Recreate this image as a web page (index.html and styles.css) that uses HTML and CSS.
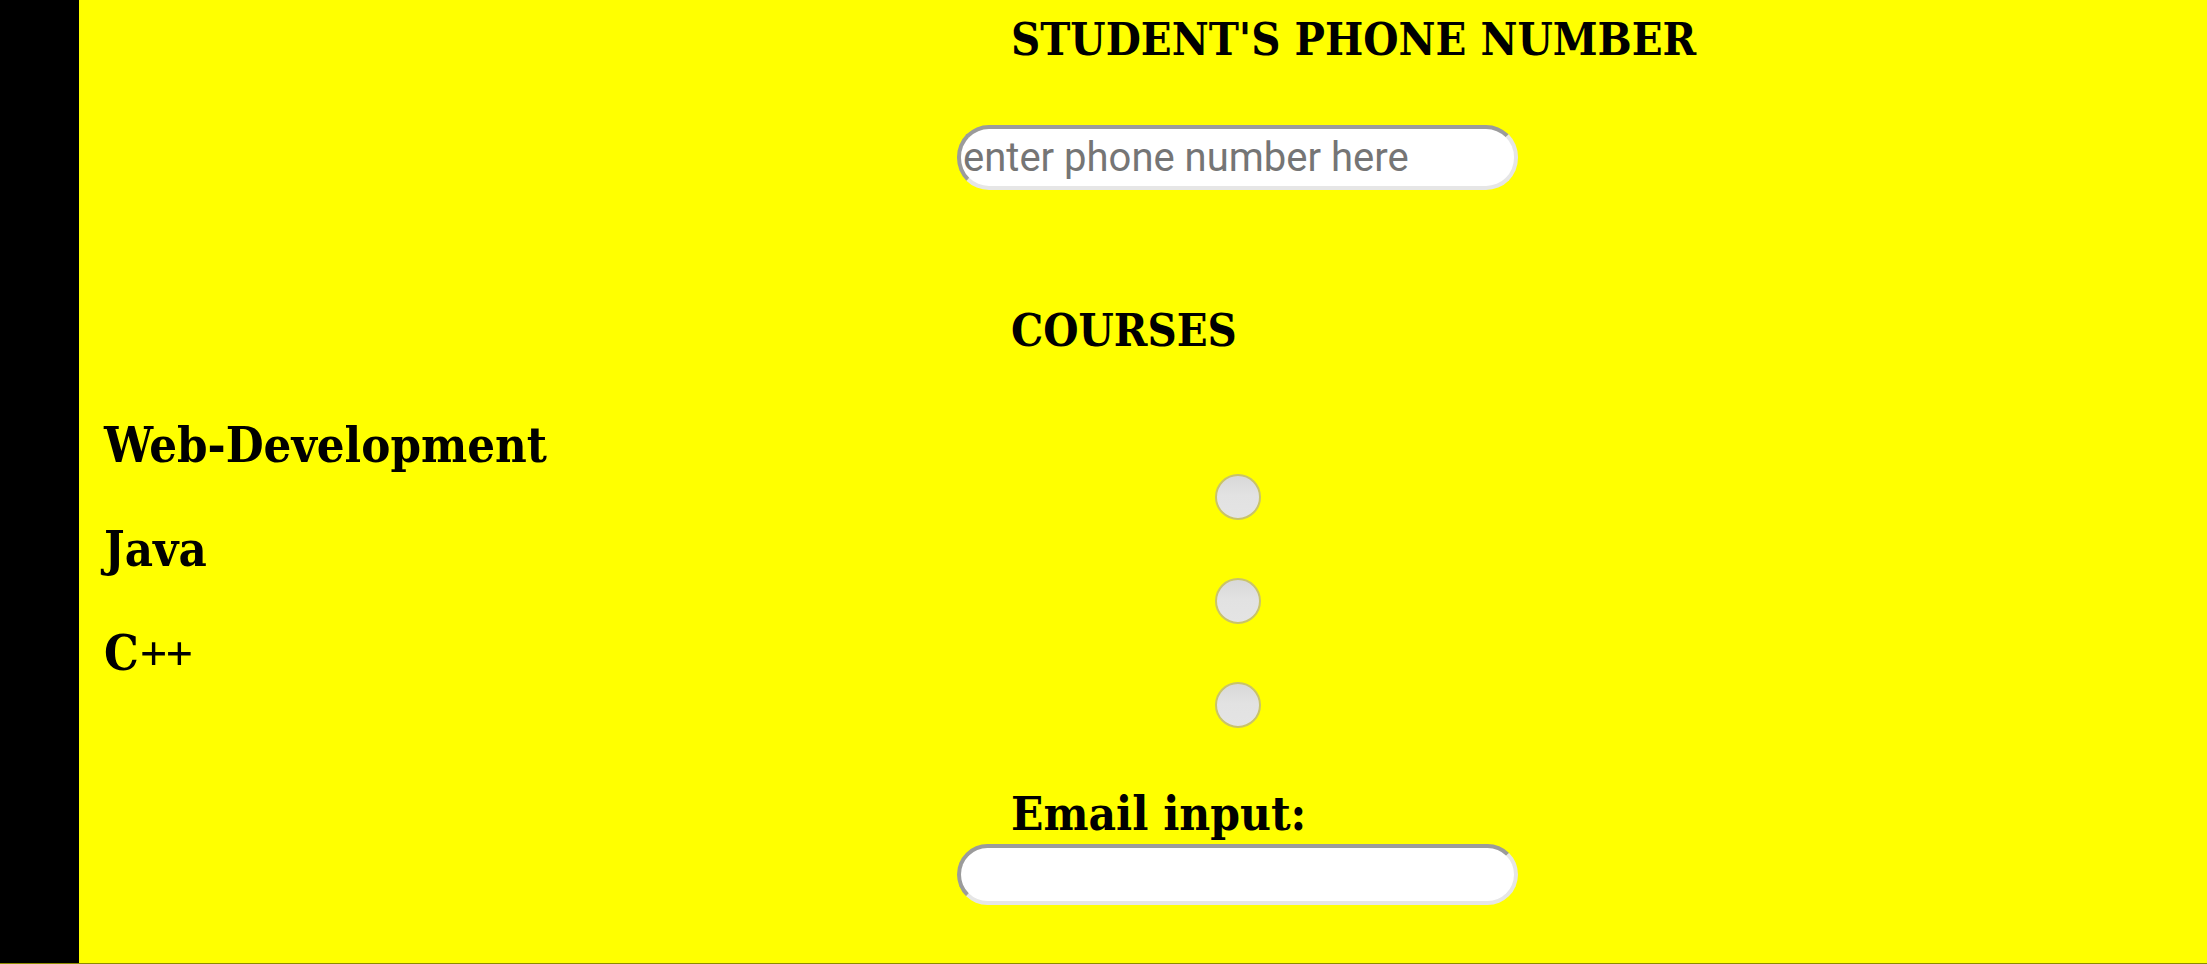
FILE: index.html
```html
<!DOCTYPE html>
<html lang="en">
<head>
<meta charset="utf-8">
<title>Student Form</title>
<link rel="stylesheet" href="styles.css">
</head>
<body>
<div class="page">
  <div class="side"></div>
  <form class="content">
    <div class="line">
      <h2 class="heading heading-phone">STUDENT'S PHONE NUMBER</h2>
    </div>
    <div class="line line-phone">
      <input class="field field-phone" type="tel" placeholder="enter phone number here">
    </div>
    <div class="line line-courses">
      <h2 class="heading heading-courses">COURSES</h2>
    </div>
    <div class="course-list">
      <div class="course">
        <label class="course-label" for="c1">Web-Development</label>
        <span class="radio-cell"><input class="radio" id="c1" type="radio" name="course"></span>
      </div>
      <div class="course">
        <label class="course-label" for="c2">Java</label>
        <span class="radio-cell"><input class="radio" id="c2" type="radio" name="course"></span>
      </div>
      <div class="course">
        <label class="course-label" for="c3">C<span class="plus">++</span></label>
        <span class="radio-cell"><input class="radio" id="c3" type="radio" name="course"></span>
      </div>
    </div>
    <div class="line line-email">
      <h2 class="heading heading-email">Email input:</h2>
    </div>
    <div class="line line-email-field">
      <input class="field field-email" type="email">
    </div>
  </form>
</div>
</body>
</html>
```

FILE: styles.css
```css
html, body {
  margin: 0;
  padding: 0;
  height: 100%;
}

body {
  background: #ffff00;
  font-family: "DejaVu Serif Condensed", "DejaVu Serif", "Liberation Serif", serif;
  font-stretch: condensed;
  color: #000;
}

.page {
  display: flex;
  height: 964px;
  box-sizing: border-box;
  border-bottom: 1px solid #8c8c00;
  overflow: hidden;
}

.side {
  width: 79px;
  flex: 0 0 79px;
  background: #000;
}

.content {
  flex: 1;
  background: #ffff00;
  padding: 17px 0 0 25px;
  display: flex;
  flex-direction: column;
}

.line,
.course {
  display: grid;
  grid-template-columns: 853px 561px;
}

.line > * {
  grid-column: 2;
}

.heading {
  margin: 0;
  font-weight: bold;
  font-size: 45px;
  line-height: 1;
  padding-left: 54px;
  white-space: nowrap;
}

.heading-email {
  font-size: 47.3px;
}

.line-phone {
  margin-top: 63px;
}

.line-courses {
  margin-top: 118px;
}

.course-list {
  margin-top: 68px;
  display: flex;
  flex-direction: column;
}

.course {
  height: 104px;
}

.course-label {
  font-size: 48.6px;
  font-weight: bold;
  line-height: 1;
  white-space: nowrap;
}

.plus {
  font-family: "Liberation Serif", serif;
  font-weight: bold;
  letter-spacing: -2px;
  margin-left: 1px;
}

.radio-cell {
  display: flex;
  justify-content: center;
  padding-top: 53px;
}

.radio {
  -webkit-appearance: none;
  appearance: none;
  margin: 0;
  width: 46px;
  height: 46px;
  box-sizing: border-box;
  border-radius: 50%;
  border: 2px solid #c9c36a;
  background: linear-gradient(#d8d8d8 0%, #e2e2e2 45%, #e4e4e4 100%);
}

.line-email {
  margin-top: 57px;
}

.line-email-field {
  margin-top: 7px;
}

.field {
  -webkit-appearance: none;
  appearance: none;
  margin: 0;
  width: 561px;
  box-sizing: border-box;
  border-style: solid;
  border-width: 4px;
  border-color: #9b9b9b #e6e6e6 #e6e6e6 #9b9b9b;
  border-radius: 32px;
  background: #fff;
  padding: 0 2px;
  font-family: Roboto, "Noto Sans", sans-serif;
  font-stretch: normal;
  font-size: 40px;
  color: #000;
  outline: none;
}

.field::placeholder {
  color: #757575;
  opacity: 1;
}

.field-phone {
  height: 65px;
}

.field-email {
  height: 61px;
}
```
